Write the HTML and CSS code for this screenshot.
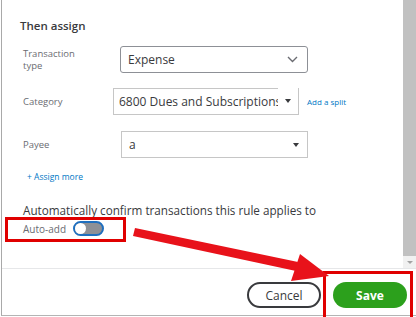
FILE: index.html
```html
<!DOCTYPE html>
<html lang="en">
<head>
    <meta charset="UTF-8">
    <meta name="viewport" content="width=device-width, initial-scale=1.0">
    <title>Then assign</title>
    <link rel="stylesheet" href="styles.css">
</head>
<body>
    <div class="dialog">
        <div class="body">
            <div class="content">
                <h2 class="section-title">Then assign</h2>

                <div class="row row-type">
                    <label class="field-label">Transaction<br>type</label>
                    <div class="select select-expense">
                        <span>Expense</span>
                        <svg class="chevron" width="11" height="7" viewBox="0 0 11 7">
                            <path d="M1 1 L5.5 5.5 L10 1" fill="none" stroke="#6b6c72" stroke-width="1.4"/>
                        </svg>
                    </div>
                </div>

                <div class="row row-category">
                    <label class="field-label">Category</label>
                    <div class="combo">
                        <div class="combo-text">6800 Dues and Subscriptions</div>
                        <div class="combo-arrow"><span class="caret"></span></div>
                    </div>
                    <a class="link link-split">Add a split</a>
                </div>

                <div class="row row-payee">
                    <label class="field-label">Payee</label>
                    <div class="select select-payee">
                        <span>a</span>
                        <span class="caret"></span>
                    </div>
                </div>

                <a class="link link-more">+ Assign more</a>

                <h3 class="confirm-title">Automatically confirm transactions this rule applies to</h3>
                <div class="auto-add">
                    <span class="auto-label">Auto-add</span>
                    <span class="toggle"><span class="knob"></span></span>
                </div>
            </div>
            <div class="scrollbar">
                <div class="thumb"></div>
                <div class="track"><span class="scroll-arrow"></span></div>
            </div>
        </div>
        <div class="footer">
            <button class="btn btn-cancel">Cancel</button>
            <button class="btn btn-save">Save</button>
        </div>
    </div>

    <!-- annotation marks drawn over the screenshot -->
    <div class="mark mark-auto"></div>
    <div class="mark mark-save"></div>
    <svg class="arrow" width="416" height="317" viewBox="0 0 416 317">
        <polygon points="135,228 298,262 296,271 133,236" fill="#e8121a"/>
        <polygon points="300,254 329,276 291,281" fill="#e8121a"/>
    </svg>
</body>
</html>
```

FILE: styles.css
```css
body {
    margin: 0;
    width: 416px;
    height: 317px;
    overflow: hidden;
    background-color: #fff;
    font-family: "Open Sans", Arial, sans-serif;
    color: #393a3d;
    position: relative;
}
.dialog {
    margin-left: 1px;
    height: 315px;
    border-left: 1px solid #a9a9a9;
    border-bottom: 1px solid #b4b4b4;
    display: flex;
    flex-direction: column;
}
.body {
    height: 268px;
    display: flex;
}
.content {
    flex: 1;
    padding-left: 21px;
}
.section-title {
    margin: 18px 0 0 -3px;
    font-size: 11.5px;
    font-weight: 600;
    line-height: 16px;
}
.row {
    display: flex;
    align-items: center;
}
.field-label {
    width: 90px;
    font-size: 9.5px;
    line-height: 12px;
    color: #6b6c72;
}
.row-type {
    margin-top: 12px;
}
.select {
    box-sizing: border-box;
    display: flex;
    align-items: center;
    justify-content: space-between;
    width: 188px;
    height: 27px;
    padding: 0 9px 0 7px;
    border: 1px solid #8d9096;
    border-radius: 3px;
    font-size: 12px;
}
.select-expense {
    margin-left: 7px;
}
.row-category {
    margin-top: 15px;
}
.combo {
    display: flex;
    width: 186px;
    height: 27px;
    box-sizing: border-box;
    border-left: 1px solid #c6c6c6;
    border-bottom: 1px solid #c6c6c6;
    border-right: 1px solid #c6c6c6;
    font-size: 12px;
}
.combo-text {
    flex: 1;
    border-top: 1px solid #c6c6c6;
    padding: 0 0 0 5px;
    line-height: 25px;
    white-space: nowrap;
    overflow: hidden;
}
.combo-arrow {
    width: 20px;
    display: flex;
    align-items: center;
    justify-content: center;
}
.caret {
    width: 0;
    height: 0;
    border-left: 3px solid transparent;
    border-right: 3px solid transparent;
    border-top: 4px solid #393a3d;
}
.link {
    color: #0077c5;
    font-size: 8px;
}
.link-split {
    margin-left: 8px;
}
.row-payee {
    margin-top: 16px;
}
.select-payee {
    width: 187px;
    margin-left: 8px;
    border-color: #c6c6c6;
    border-radius: 0;
    padding-right: 8px;
}
.link-more {
    display: block;
    margin: 13px 0 0 4px;
    font-size: 8.5px;
}
.confirm-title {
    margin: 20px 0 0;
    font-size: 11.7px;
    font-weight: 400;
    line-height: 16px;
}
.auto-add {
    display: flex;
    align-items: center;
    gap: 7px;
    margin-top: 3px;
}
.auto-label {
    font-size: 10px;
    color: #6b6c72;
}
.toggle {
    box-sizing: border-box;
    width: 31px;
    height: 15px;
    border: 2px solid #1f6fbf;
    border-radius: 8px;
    background-color: #8d9096;
    display: flex;
    align-items: center;
}
.knob {
    width: 11px;
    height: 11px;
    border-radius: 50%;
    background-color: #fff;
}
.scrollbar {
    width: 13px;
    display: flex;
    flex-direction: column;
}
.thumb {
    height: 256px;
    background-color: #c1c1c1;
}
.track {
    flex: 1;
    background-color: #f1f1f1;
    display: flex;
    justify-content: center;
    padding-top: 5px;
}
.scroll-arrow {
    width: 0;
    height: 0;
    border-left: 3px solid transparent;
    border-right: 3px solid transparent;
    border-top: 3px solid #a3a3a3;
}
.footer {
    flex: 1;
    border-top: 1px solid #e6e7e9;
    display: flex;
    justify-content: flex-end;
    align-items: center;
    gap: 12px;
    padding: 6px 9px 0 0;
}
.btn {
    height: 26px;
    width: 74px;
    border-radius: 13px;
    font-family: "Open Sans", Arial, sans-serif;
    font-size: 12px;
    cursor: pointer;
}
.btn-cancel {
    background-color: #fff;
    border: 2px solid #393a3d;
    color: #393a3d;
}
.btn-save {
    background-color: #2ca01c;
    border: none;
    color: #fff;
    font-weight: 700;
}
.mark {
    position: absolute;
    border: 3px solid #e00000;
    box-sizing: border-box;
}
.mark-auto {
    left: 5px;
    top: 217px;
    width: 121px;
    height: 25px;
}
.mark-save {
    left: 323px;
    top: 271px;
    width: 90px;
    height: 50px;
}
.arrow {
    position: absolute;
    left: 0;
    top: 0;
    pointer-events: none;
}
```
